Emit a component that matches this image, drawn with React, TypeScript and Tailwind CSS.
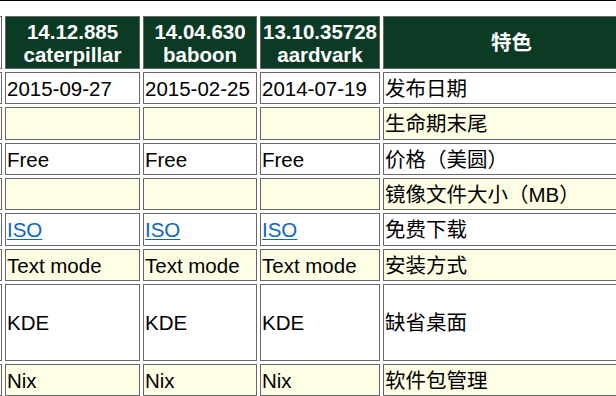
import React from "react";

type Row = { cells: React.ReactNode[]; feat: string; yellow: boolean };

const iso = (
  <a href="#" className="text-[#0b66c8] underline decoration-1 underline-offset-[2px]">
    ISO
  </a>
);

const rows: Row[] = [
  { cells: ["2015-09-27", "2015-02-25", "2014-07-19"], feat: "发布日期", yellow: false },
  { cells: ["", "", ""], feat: "生命期末尾", yellow: true },
  { cells: ["Free", "Free", "Free"], feat: "价格（美圆）", yellow: false },
  { cells: ["", "", ""], feat: "镜像文件大小（MB）", yellow: true },
  { cells: [iso, iso, iso], feat: "免费下载", yellow: false },
  { cells: ["Text mode", "Text mode", "Text mode"], feat: "安装方式", yellow: true },
  { cells: ["KDE", "KDE", "KDE"], feat: "缺省桌面", yellow: false },
  { cells: ["Nix", "Nix", "Nix"], feat: "软件包管理", yellow: true },
];

const headers: [string, string][] = [
  ["14.12.885", "caterpillar"],
  ["14.04.630", "baboon"],
  ["13.10.35728", "aardvark"],
];

function Head({ children }: { children?: React.ReactNode }) {
  return (
    <div className="flex flex-col items-center justify-center border border-[#686868] bg-[#0c3b25] text-center font-bold leading-[23px] text-white">
      {children}
    </div>
  );
}

function Cell({ children, yellow }: { children?: React.ReactNode; yellow: boolean }) {
  return (
    <div
      className={
        "flex items-center whitespace-nowrap border border-[#686868] pl-[1px] leading-[23px] text-black " +
        (yellow ? "bg-[#fdfee4]" : "bg-white")
      }
    >
      {children}
    </div>
  );
}

export default function App() {
  return (
    <div className="h-[396px] w-[616px] overflow-hidden bg-white font-['Liberation_Sans','Noto_Sans_CJK_SC',sans-serif] text-[20.5px]">
      <div className="h-[1px] w-full bg-black" />
      <div className="mt-[15px] ml-[-48px] grid w-max grid-cols-[50px_135px_114px_120px_257px] grid-rows-[53px_32px_33px_32px_32px_33px_32px_77px_32px] gap-[3px]">
        <div className="border border-[#686868] bg-white" />
        {headers.map(([a, b]) => (
          <Head key={a}>
            <span>{a}</span>
            <span>{b}</span>
          </Head>
        ))}
        <Head>
          <span>特色</span>
        </Head>
        {rows.map((r, i) => (
          <React.Fragment key={i}>
            <Cell yellow={r.yellow} />
            {r.cells.map((c, j) => (
              <Cell key={j} yellow={r.yellow}>
                {c}
              </Cell>
            ))}
            <Cell yellow={r.yellow}>
              <span>{r.feat}</span>
            </Cell>
          </React.Fragment>
        ))}
      </div>
    </div>
  );
}
